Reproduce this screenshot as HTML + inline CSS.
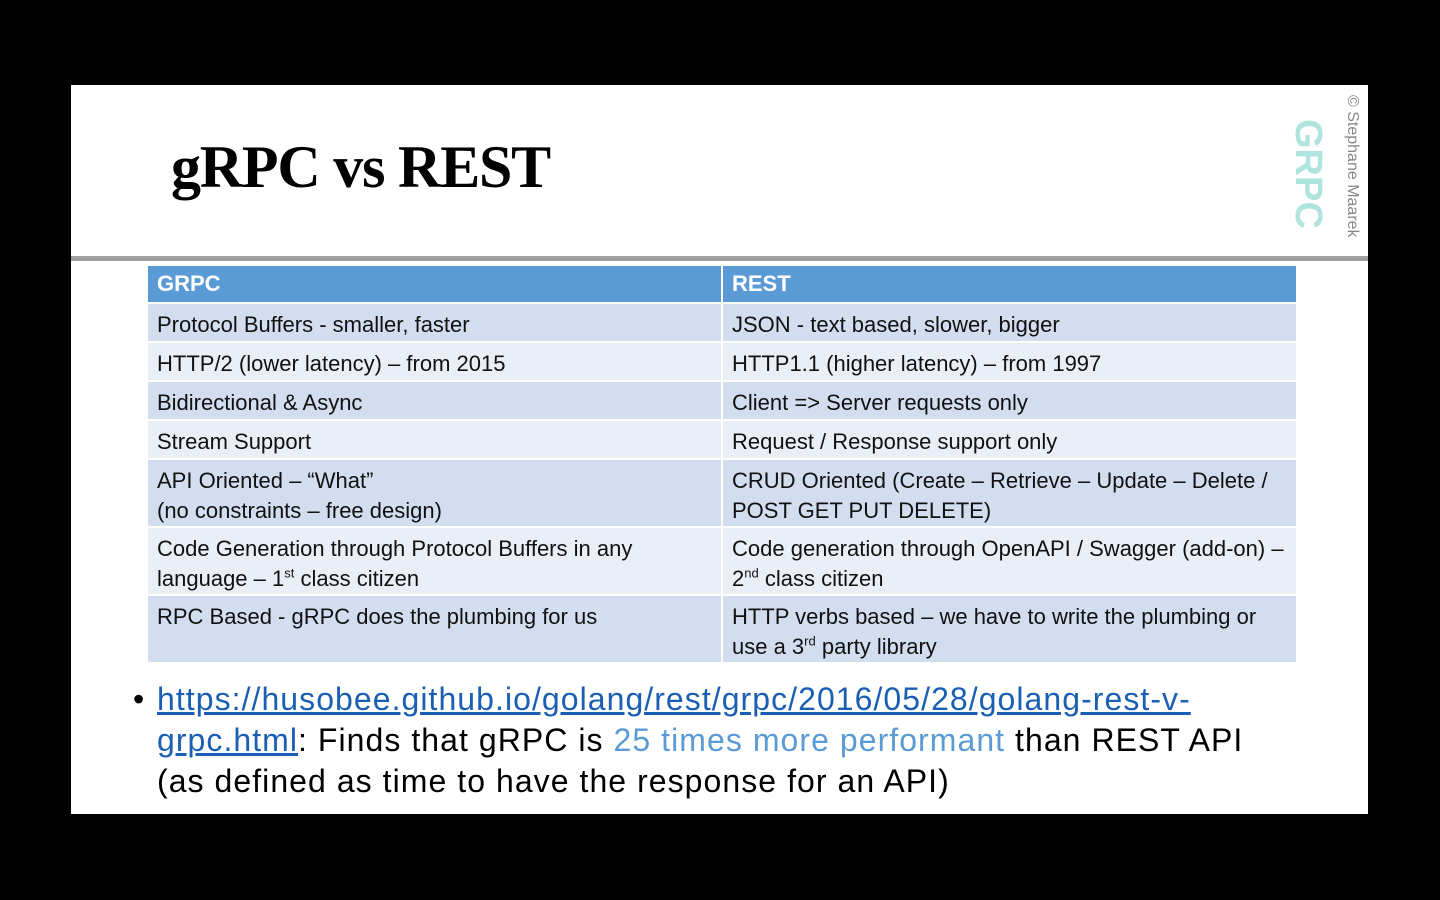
<!DOCTYPE html>
<html><head><meta charset="utf-8"><style>
body{margin:0;width:1440px;height:900px;background:#000;position:relative;overflow:hidden;font-family:"Liberation Sans",sans-serif}
.slide{position:absolute;left:71px;top:85px;width:1297px;height:729px;background:#fff}
.title{position:absolute;left:100px;top:48px;font-family:"Liberation Serif",serif;font-weight:bold;font-size:60px;color:#000;letter-spacing:-1.2px}
.rule{position:absolute;left:0;top:171px;width:1297px;height:5px;background:#a0a0a0}
.tbl{position:absolute;left:77px;top:181px;width:1148px}
.r{display:flex;margin-bottom:2px}
.r div{box-sizing:border-box;padding:6px 9px 0;font-size:22px;line-height:30px;color:#111;white-space:nowrap}
.r div:first-child{width:573px;margin-right:2px}
.r div:last-child{width:573px}
.h div{background:#5b9bd5;color:#fff;font-weight:bold;height:36px;padding-top:3px}
.o div{background:#d2deef}
.e div{background:#eaeff7}
sup{font-size:13px;line-height:0}
.bul{position:absolute;left:86px;top:594px;width:1200px;font-size:32px;line-height:41px;color:#000;white-space:nowrap;letter-spacing:1.05px}
.bul a{color:#1a5fb4;text-decoration:underline}
.side{position:absolute;left:1268px;top:10px;transform-origin:0 0;transform:rotate(90deg) translateY(-22px);font-size:16px;color:#888;white-space:nowrap}
.logo{position:absolute;left:1222px;top:34px;transform-origin:0 0;transform:rotate(90deg) translateY(-36px);font-size:38px;font-weight:bold;color:#aee3de;white-space:nowrap}
</style></head><body>
<div class="slide">
<div class="title">gRPC vs REST</div>
<div class="logo">GRPC</div>
<div class="side">© Stephane Maarek</div>
<div class="rule"></div>
<div class="tbl">
<div class="r h"><div>GRPC</div><div>REST</div></div>
<div class="r o"><div style="height:37px">Protocol Buffers - smaller, faster</div><div>JSON - text based, slower, bigger</div></div>
<div class="r e"><div style="height:37px">HTTP/2 (lower latency) – from 2015</div><div>HTTP1.1 (higher latency) – from 1997</div></div>
<div class="r o"><div style="height:37px">Bidirectional &amp; Async</div><div>Client =&gt; Server requests only</div></div>
<div class="r e"><div style="height:37px">Stream Support</div><div>Request / Response support only</div></div>
<div class="r o"><div style="height:66px">API Oriented – “What”<br>(no constraints – free design)</div><div>CRUD Oriented (Create – Retrieve – Update – Delete /<br>POST GET PUT DELETE)</div></div>
<div class="r e"><div style="height:66px">Code Generation through Protocol Buffers in any<br>language – 1<sup>st</sup> class citizen</div><div>Code generation through OpenAPI / Swagger (add-on) –<br>2<sup>nd</sup> class citizen</div></div>
<div class="r o"><div style="height:66px">RPC Based - gRPC does the plumbing for us</div><div>HTTP verbs based – we have to write the plumbing or<br>use a 3<sup>rd</sup> party library</div></div>
</div>
<div class="bul"><span style="position:absolute;left:-24px">•</span><a>https://husobee.github.io/golang/rest/grpc/2016/05/28/golang-rest-v-<br>grpc.html</a>: Finds that gRPC is <span style="color:#5b9bd5">25 times more performant</span> than REST API<br>(as defined as time to have the response for an API)</div>
</div>
</body></html>
